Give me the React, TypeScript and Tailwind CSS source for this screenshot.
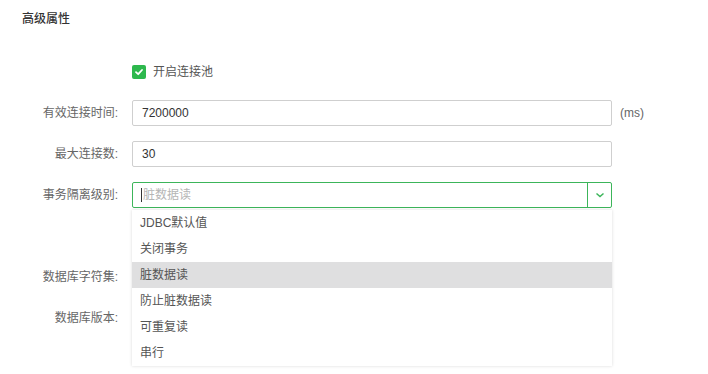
import React from "react";

const font = { fontFamily: '"Liberation Sans", "Noto Sans CJK SC", sans-serif' };

function Row({ label, children }: { label: string; children?: React.ReactNode }) {
  return (
    <div className="flex items-center h-[26px]">
      <div className="w-[118px] text-right text-[12px] text-[#666] leading-none">{label}</div>
      <div className="ml-[14px] flex items-center">{children}</div>
    </div>
  );
}

export default function App() {
  const items = ["JDBC默认值", "关闭事务", "脏数据读", "防止脏数据读", "可重复读", "串行"];
  return (
    <div className="w-[708px] h-[374px] bg-white relative overflow-hidden" style={font}>
      <div className="pl-[22px] pt-[11px] text-[12px] font-medium text-[#333] leading-[16px]">高级属性</div>
      <div className="mt-[38px] flex items-center ml-[132px] h-[14px]">
        <div className="w-[14px] h-[14px] rounded-[2px] bg-[#2db84d] flex items-center justify-center">
          <svg width="10" height="10" viewBox="0 0 10 10">
            <path d="M2 5.2 L4.2 7.2 L8 3" stroke="#fff" strokeWidth="1.8" fill="none" strokeLinecap="round" strokeLinejoin="round" />
          </svg>
        </div>
        <span className="ml-[7px] text-[12px] text-[#555] leading-none">开启连接池</span>
      </div>
      <div className="mt-[21px] flex flex-col gap-[15px]">
        <Row label="有效连接时间:">
          <div className="w-[480px] h-[26px] border border-[#cfcfcf] rounded-[2px] flex items-center pl-[9px] text-[12px] text-[#333]">7200000</div>
          <span className="ml-[8px] text-[12px] text-[#666]">(ms)</span>
        </Row>
        <Row label="最大连接数:">
          <div className="w-[480px] h-[26px] border border-[#cfcfcf] rounded-[2px] flex items-center pl-[9px] text-[12px] text-[#333]">30</div>
        </Row>
        <Row label="事务隔离级别:">
          <div className="relative w-[480px] h-[26px]">
            <div className="w-[480px] h-[26px] border border-[#3cb55a] rounded-[2px] flex items-center">
              <div className="flex-1 flex items-center pl-[8px] text-[12px] text-[#b5b5b5]">
                <span className="w-px h-[14px] bg-[#333] mr-px"></span>
                脏数据读
              </div>
              <div className="w-[24px] h-full border-l border-[#3cb55a] flex items-center justify-center">
                <svg width="10" height="6" viewBox="0 0 10 6">
                  <path d="M1.5 1.5 L5 4.5 L8.5 1.5" stroke="#3cb55a" strokeWidth="1.5" fill="none" />
                </svg>
              </div>
            </div>
            <div className="absolute left-0 top-[28px] w-[480px] bg-white shadow-[0_0_3px_rgba(0,0,0,0.15)] z-10">
              {items.map((it, i) => (
                <div
                  key={it}
                  className={`h-[26px] flex items-center pl-[8px] text-[12px] text-[#555] ${i === 2 ? "bg-[#dfdfe0]" : ""}`}
                >
                  {it}
                </div>
              ))}
            </div>
          </div>
        </Row>
        <Row label="">
          <div className="w-[480px] h-[26px]"></div>
        </Row>
        <Row label="数据库字符集:">
          <div className="w-[480px] h-[26px] border border-[#cfcfcf] rounded-[2px]"></div>
        </Row>
        <Row label="数据库版本:">
          <div className="w-[480px] h-[26px] border border-[#cfcfcf] rounded-[2px]"></div>
        </Row>
      </div>
    </div>
  );
}
